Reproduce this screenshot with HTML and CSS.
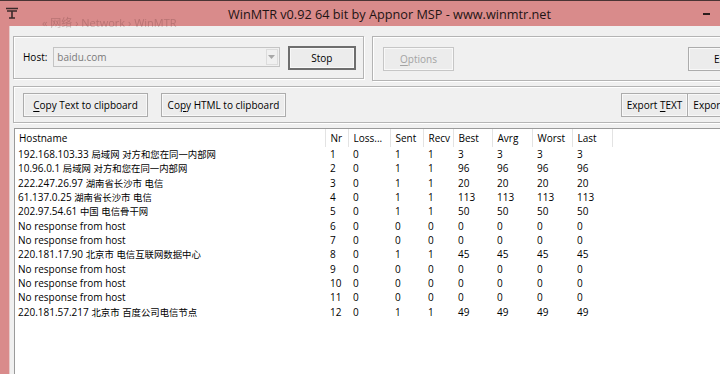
FILE: index.html
```html
<!DOCTYPE html>
<html lang="zh-CN">
<head>
    <meta charset="UTF-8">
    <meta name="viewport" content="width=device-width, initial-scale=1.0">
    <title>WinMTR</title>
    <link rel="stylesheet" href="styles.css">
</head>
<body>

    <div class="window">
        <div class="titlebar">
            <svg class="app-icon" width="14" height="12" viewBox="0 0 14 12">
                <path d="M1 1.5h12M2 4h10M7 4v7M4 11h6" stroke="#3a2a2a" stroke-width="1.6" fill="none"/>
            </svg>
            <span class="crumb">« 网络 › Network › WinMTR</span>
            <span class="title">WinMTR v0.92 64 bit by Appnor MSP - www.winmtr.net</span>
            <span class="min-btn"></span>
        </div>

        <div class="frame">
            <div class="client">

                <div class="top-row">
                    <div class="group host-group">
                        <label class="host-label">Host:</label>
                        <div class="combo">
                            <span class="combo-text">baidu.com</span>
                            <span class="combo-arrow">
                                <svg width="7" height="4" viewBox="0 0 7 4"><path d="M0 0h7L3.5 4z" fill="#a8a8a8"/></svg>
                            </span>
                        </div>
                        <button class="btn btn-default">Stop</button>
                    </div>
                    <div class="group opt-group">
                        <button class="btn btn-disabled"><u>O</u>ptions</button>
                        <button class="btn">Exit</button>
                    </div>
                </div>

                <div class="group tools">
                    <div class="tools-left">
                        <button class="btn btn-wide"><u>C</u>opy Text to clipboard</button>
                        <button class="btn btn-wide">Co<u>p</u>y HTML to clipboard</button>
                    </div>
                    <div class="tools-right">
                        <button class="btn btn-export">Export <u>T</u>EXT</button>
                        <button class="btn btn-export">Export <u>H</u>TML</button>
                    </div>
                </div>

                <div class="list">
                    <table class="trace">
                        <colgroup>
                            <col class="c-host">
                            <col class="c-nr">
                            <col class="c-loss">
                            <col class="c-sent">
                            <col class="c-recv">
                            <col class="c-best">
                            <col class="c-avrg">
                            <col class="c-worst">
                            <col class="c-last">
                            <col>
                        </colgroup>
                        <thead>
                            <tr>
                                <th>Hostname</th><th>Nr</th><th>Loss...</th><th>Sent</th><th>Recv</th>
                                <th>Best</th><th>Avrg</th><th>Worst</th><th>Last</th><th class="fill"></th>
                            </tr>
                        </thead>
                        <tbody>
                            <tr><td>192.168.103.33 <span class="cn">局域网</span> <span class="cn">对方和您在同一内部网</span></td><td>1</td><td>0</td><td>1</td><td>1</td><td>3</td><td>3</td><td>3</td><td>3</td><td></td></tr>
                            <tr><td>10.96.0.1 <span class="cn">局域网</span> <span class="cn">对方和您在同一内部网</span></td><td>2</td><td>0</td><td>1</td><td>1</td><td>96</td><td>96</td><td>96</td><td>96</td><td></td></tr>
                            <tr><td>222.247.26.97 <span class="cn">湖南省长沙市</span> <span class="cn">电信</span></td><td>3</td><td>0</td><td>1</td><td>1</td><td>20</td><td>20</td><td>20</td><td>20</td><td></td></tr>
                            <tr><td>61.137.0.25 <span class="cn">湖南省长沙市</span> <span class="cn">电信</span></td><td>4</td><td>0</td><td>1</td><td>1</td><td>113</td><td>113</td><td>113</td><td>113</td><td></td></tr>
                            <tr><td>202.97.54.61 <span class="cn">中国</span> <span class="cn">电信骨干网</span></td><td>5</td><td>0</td><td>1</td><td>1</td><td>50</td><td>50</td><td>50</td><td>50</td><td></td></tr>
                            <tr><td>No response from host</td><td>6</td><td>0</td><td>0</td><td>0</td><td>0</td><td>0</td><td>0</td><td>0</td><td></td></tr>
                            <tr><td>No response from host</td><td>7</td><td>0</td><td>0</td><td>0</td><td>0</td><td>0</td><td>0</td><td>0</td><td></td></tr>
                            <tr><td>220.181.17.90 <span class="cn">北京市</span> <span class="cn">电信互联网数据中心</span></td><td>8</td><td>0</td><td>1</td><td>1</td><td>45</td><td>45</td><td>45</td><td>45</td><td></td></tr>
                            <tr><td>No response from host</td><td>9</td><td>0</td><td>0</td><td>0</td><td>0</td><td>0</td><td>0</td><td>0</td><td></td></tr>
                            <tr><td>No response from host</td><td>10</td><td>0</td><td>0</td><td>0</td><td>0</td><td>0</td><td>0</td><td>0</td><td></td></tr>
                            <tr><td>No response from host</td><td>11</td><td>0</td><td>0</td><td>0</td><td>0</td><td>0</td><td>0</td><td>0</td><td></td></tr>
                            <tr><td>220.181.57.217 <span class="cn">北京市</span> <span class="cn">百度公司电信节点</span></td><td>12</td><td>0</td><td>1</td><td>1</td><td>49</td><td>49</td><td>49</td><td>49</td><td></td></tr>
                        </tbody>
                    </table>
                </div>

            </div>
        </div>
    </div>

</body>
</html>
```

FILE: styles.css
```css
body {
    margin: 0;
    width: 720px;
    height: 374px;
    overflow: hidden;
    font-family: 'Open Sans', 'Noto Sans CJK SC', sans-serif;
    font-size: 10px;
    color: #000;
    background-color: #d98b8b;
}

.window {
    width: 771px;
    height: 374px;
    display: flex;
    flex-direction: column;
}

/* title bar */
.titlebar {
    height: 26px;
    flex-shrink: 0;
    position: relative;
    display: flex;
    align-items: center;
    justify-content: center;
    background-color: #d98b8b;
    border-top: 1px solid #4a3434;
    box-sizing: border-box;
}

.app-icon {
    position: absolute;
    left: 5px;
    top: 6px;
}

.crumb {
    position: absolute;
    left: 42px;
    top: 13px;
    font-size: 11px;
    color: rgba(110, 60, 60, 0.3);
    filter: blur(0.7px);
}

.title {
    font-size: 12.7px;
    color: #1e1414;
    margin-left: 8px;
}

.min-btn {
    position: absolute;
    left: 703px;
    top: 12px;
    width: 7px;
    height: 2px;
    background-color: #2a1c1c;
}

/* window body */
.frame {
    flex: 1;
    display: flex;
    padding-left: 9px;
    min-height: 0;
}

.client {
    flex: 1;
    display: flex;
    flex-direction: column;
    gap: 5px;
    background-color: #f0f0f0;
    border-left: 1px solid #e6caca;
    padding: 10px 0 0 3px;
    min-height: 0;
}

.group {
    border: 1px solid #b4b4b4;
    box-shadow: inset 1px 1px 0 #fff, 1px 1px 0 #fff;
    display: flex;
    align-items: center;
}

.top-row {
    display: flex;
    gap: 8px;
}

.host-group {
    width: 351px;
    height: 43px;
    padding: 0 7px 0 9px;
    box-sizing: border-box;
}

.host-label {
    margin-right: 6px;
    margin-top: -2px;
}

.combo {
    width: 228px;
    height: 20px;
    box-sizing: border-box;
    border: 1px solid #c4c4c4;
    background-color: #f0f0f0;
    display: flex;
    align-items: center;
    margin-top: -2px;
}

.combo-text {
    flex: 1;
    padding-left: 3px;
    color: #7a7a7a;
}

.combo-arrow {
    width: 12px;
    height: 16px;
    margin-right: 1px;
    border: 1px solid #dcdcdc;
    box-sizing: border-box;
    display: flex;
    align-items: center;
    justify-content: center;
}

.host-group .btn {
    margin-left: 8px;
}

.opt-group {
    flex: 1;
    height: 43px;
    padding: 0 13px 0 10px;
    justify-content: space-between;
}

.btn {
    font-family: inherit;
    font-size: 10px;
    color: #000;
    height: 24px;
    width: 69px;
    padding: 0;
    background-color: #ececec;
    border: 1px solid #acacac;
    border-radius: 0;
    box-shadow: inset 0 0 0 1px #f8f8f8;
}

.btn u {
    text-decoration-thickness: 1px;
    text-underline-offset: 2px;
}

.btn-default {
    border: 2px solid #6e6e6e;
    width: 69px;
}

.btn-disabled {
    color: #a3a3a3;
    border-color: #c6c6c6;
    width: 71px;
}

.tools {
    height: 37px;
    padding: 0 10px 0 9px;
    box-sizing: border-box;
    justify-content: space-between;
}

.tools-left {
    display: flex;
    gap: 13px;
}

.btn-wide {
    width: 125px;
}

.tools-right {
    display: flex;
}

.btn-export {
    width: 67px;
}

.btn-export + .btn-export {
    border-left: none;
    width: 72px;
}

/* result list */
.list {
    flex: 1;
    background-color: #fff;
    border-left: 1px solid #9a9a9a;
    border-top: 1px solid #9a9a9a;
    margin-left: 1px;
    min-height: 0;
    overflow: hidden;
}

.trace {
    border-collapse: collapse;
    table-layout: fixed;
    width: 100%;
}

.c-host { width: 310px; }
.c-nr { width: 23px; }
.c-loss { width: 42px; }
.c-sent { width: 33px; }
.c-recv { width: 30px; }
.c-best { width: 39px; }
.c-avrg { width: 40px; }
.c-worst { width: 40px; }
.c-last { width: 40px; }

.trace th {
    height: 18px;
    padding: 0 0 0 5px;
    text-align: left;
    font-weight: normal;
    border-right: 1px solid #e3e3e3;
    white-space: nowrap;
    overflow: hidden;
}

.trace th:first-child {
    padding-left: 4px;
}

.trace th.fill {
    border-right: none;
}

.trace td {
    height: 14px;
    line-height: 14px;
    padding: 0 0 0 5px;
    white-space: nowrap;
    overflow: hidden;
}

.trace tbody tr:nth-child(3n) td {
    height: 15px;
}

.trace td:first-child {
    padding-left: 3px;
}

.cn {
    font-size: 9.4px;
    line-height: 1;
}
```
